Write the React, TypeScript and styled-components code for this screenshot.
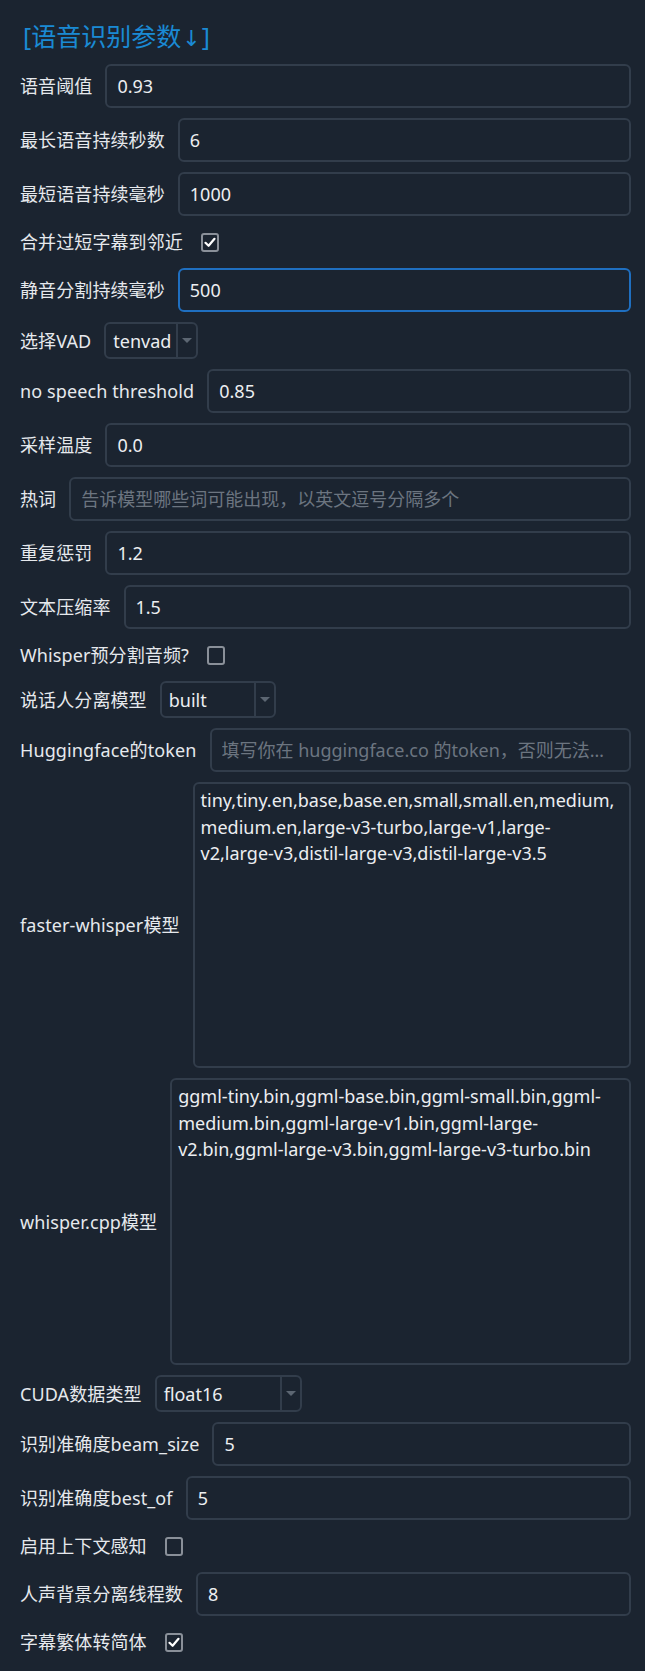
import styled, { createGlobalStyle } from 'styled-components';

const GlobalStyle = createGlobalStyle`
	html, body {
		margin: 0;
		padding: 0;
		background: #1b2430;
	}
	body {
		font-family: 'Noto Sans', 'Noto Sans CJK SC', sans-serif;
		color: #e6e9ed;
	}
`;

const StyledPanel = styled.div`
	display: flex;
	flex-direction: column;
	gap: 10px;
	padding: 20px 14px 13px 20px;
	font-size: 18px;
`;

const StyledTitle = styled.h2`
	margin: 0 0 2px;
	padding-left: 3px;
	height: 32px;
	font-size: 25px;
	font-weight: 400;
	line-height: 32px;
	color: #1a8ad4;
`;

const StyledArrow = styled.span`
	font-family: 'DejaVu Sans', sans-serif;
	font-size: 22px;
	line-height: 1;
	margin: 0 1px;
`;

const StyledRow = styled.div<{ $height: number }>`
	display: flex;
	align-items: center;
	gap: 13px;
	height: ${(p) => p.$height}px;
`;

const StyledLabel = styled.label`
	flex: none;
	white-space: nowrap;
	color: #e6e9ed;
	line-height: 24px;
	letter-spacing: 0.1px;
`;

const fieldBase = `
	box-sizing: border-box;
	flex: 1;
	min-width: 0;
	border-radius: 6px;
	background: transparent;
	color: #eceef1;
	font-family: 'Noto Sans', 'Noto Sans CJK SC', sans-serif;
	font-size: 18px;
	outline: none;
`;

const StyledInput = styled.input<{ $focused?: boolean }>`
	${fieldBase}
	height: 44px;
	padding: 0 10px;
	border: 2px solid ${(p) => (p.$focused ? '#1f6fc0' : '#323d4b')};
	text-overflow: ellipsis;
	&::placeholder {
		color: #6c7580;
	}
`;

const StyledTextArea = styled.textarea<{ $height: number }>`
	${fieldBase}
	height: ${(p) => p.$height}px;
	padding: 3px 8px 3px 6px;
	border: 2px solid #323d4b;
	line-height: 26.5px;
	resize: none;
`;

const StyledSelect = styled.div<{ $width: number }>`
	box-sizing: border-box;
	display: flex;
	width: ${(p) => p.$width}px;
	height: 37px;
	border: 2px solid #323d4b;
	border-radius: 6px;
	color: #eceef1;
`;

const StyledSelectValue = styled.span`
	flex: 1;
	display: flex;
	align-items: center;
	padding-left: 7px;
	white-space: nowrap;
	overflow: hidden;
`;

const StyledSelectArrow = styled.span`
	flex: none;
	width: 18px;
	display: flex;
	align-items: center;
	justify-content: center;
	border-left: 2px solid #323d4b;
	&::after {
		content: '';
		border-left: 5px solid transparent;
		border-right: 5px solid transparent;
		border-top: 5px solid #5c6672;
	}
`;

const StyledCheckbox = styled.span`
	box-sizing: border-box;
	display: flex;
	align-items: center;
	justify-content: center;
	width: 18px;
	height: 19px;
	margin-left: 5px;
	border: 2px solid #8a9099;
	border-radius: 3px;
`;

function Field({ label, value, placeholder, focused }: { label: string; value?: string; placeholder?: string; focused?: boolean }) {
	return (
		<StyledRow $height={44}>
			<StyledLabel>{label}</StyledLabel>
			<StyledInput defaultValue={value} placeholder={placeholder} $focused={focused} />
		</StyledRow>
	);
}

function SelectField({ label, value, width }: { label: string; value: string; width: number }) {
	return (
		<StyledRow $height={37}>
			<StyledLabel>{label}</StyledLabel>
			<StyledSelect $width={width}>
				<StyledSelectValue>{value}</StyledSelectValue>
				<StyledSelectArrow />
			</StyledSelect>
		</StyledRow>
	);
}

function CheckField({ label, checked }: { label: string; checked?: boolean }) {
	return (
		<StyledRow $height={32}>
			<StyledLabel>{label}</StyledLabel>
			<StyledCheckbox>
				{checked && (
					<svg width="12" height="11" viewBox="0 0 12 11">
						<path d="M1.5 5.8 L4.6 8.8 L10.5 1.8" fill="none" stroke="#ffffff" strokeWidth="2.2" strokeLinecap="round" strokeLinejoin="round" />
					</svg>
				)}
			</StyledCheckbox>
		</StyledRow>
	);
}

function AreaField({ label, value, height }: { label: string; value: string; height: number }) {
	return (
		<StyledRow $height={height}>
			<StyledLabel>{label}</StyledLabel>
			<StyledTextArea $height={height} defaultValue={value} />
		</StyledRow>
	);
}

export default function App() {
	return (
		<>
			<GlobalStyle />
			<StyledPanel>
				<StyledTitle>
					[语音识别参数<StyledArrow>↓</StyledArrow>]
				</StyledTitle>
				<Field label="语音阈值" value="0.93" />
				<Field label="最长语音持续秒数" value="6" />
				<Field label="最短语音持续毫秒" value="1000" />
				<CheckField label="合并过短字幕到邻近" checked />
				<Field label="静音分割持续毫秒" value="500" focused />
				<SelectField label="选择VAD" value="tenvad" width={94} />
				<Field label="no speech threshold" value="0.85" />
				<Field label="采样温度" value="0.0" />
				<Field label="热词" placeholder="告诉模型哪些词可能出现，以英文逗号分隔多个" />
				<Field label="重复惩罚" value="1.2" />
				<Field label="文本压缩率" value="1.5" />
				<CheckField label="Whisper预分割音频?" />
				<SelectField label="说话人分离模型" value="built" width={116} />
				<Field label="Huggingface的token" placeholder="填写你在 huggingface.co 的token，否则无法使用说话人分离" />
				<AreaField
					label="faster-whisper模型"
					height={286}
					value="tiny,tiny.en,base,base.en,small,small.en,medium,medium.en,large-v3-turbo,large-v1,large-v2,large-v3,distil-large-v3,distil-large-v3.5"
				/>
				<AreaField
					label="whisper.cpp模型"
					height={287}
					value="ggml-tiny.bin,ggml-base.bin,ggml-small.bin,ggml-medium.bin,ggml-large-v1.bin,ggml-large-v2.bin,ggml-large-v3.bin,ggml-large-v3-turbo.bin"
				/>
				<SelectField label="CUDA数据类型" value="float16" width={147} />
				<Field label="识别准确度beam_size" value="5" />
				<Field label="识别准确度best_of" value="5" />
				<CheckField label="启用上下文感知" />
				<Field label="人声背景分离线程数" value="8" />
				<CheckField label="字幕繁体转简体" checked />
			</StyledPanel>
		</>
	);
}
